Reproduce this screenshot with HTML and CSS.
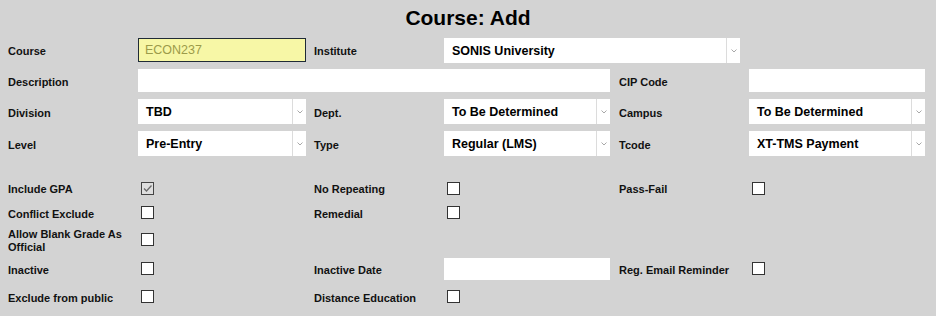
FILE: index.html
```html
<!DOCTYPE html>
<html lang="en">
<head>
  <meta charset="UTF-8" />
  <title>Course: Add</title>
  <link rel="stylesheet" href="styles.css">
</head>
<body>
  <h1 class="page-title">Course: Add</h1>

  <!-- Main fields -->
  <div class="form-grid">
    <label class="lbl">Course</label>
    <div class="text-input course-code">ECON237</div>
    <label class="lbl mid">Institute</label>
    <div class="select wide">
      <span class="value">SONIS University</span>
      <span class="arrow"><svg width="6" height="4" viewBox="0 0 6 4"><path d="M0.5 0.5 L3 3 L5.5 0.5" fill="none" stroke="#a8a8a8" stroke-width="1"/></svg></span>
    </div>
    <div></div>

    <label class="lbl">Description</label>
    <div class="text-input description"></div>
    <label class="lbl right">CIP Code</label>
    <div class="text-input"></div>

    <label class="lbl">Division</label>
    <div class="select">
      <span class="value">TBD</span>
      <span class="arrow"><svg width="6" height="4" viewBox="0 0 6 4"><path d="M0.5 0.5 L3 3 L5.5 0.5" fill="none" stroke="#a8a8a8" stroke-width="1"/></svg></span>
    </div>
    <label class="lbl mid">Dept.</label>
    <div class="select">
      <span class="value">To Be Determined</span>
      <span class="arrow"><svg width="6" height="4" viewBox="0 0 6 4"><path d="M0.5 0.5 L3 3 L5.5 0.5" fill="none" stroke="#a8a8a8" stroke-width="1"/></svg></span>
    </div>
    <label class="lbl right">Campus</label>
    <div class="select">
      <span class="value">To Be Determined</span>
      <span class="arrow"><svg width="6" height="4" viewBox="0 0 6 4"><path d="M0.5 0.5 L3 3 L5.5 0.5" fill="none" stroke="#a8a8a8" stroke-width="1"/></svg></span>
    </div>

    <label class="lbl">Level</label>
    <div class="select">
      <span class="value">Pre-Entry</span>
      <span class="arrow"><svg width="6" height="4" viewBox="0 0 6 4"><path d="M0.5 0.5 L3 3 L5.5 0.5" fill="none" stroke="#a8a8a8" stroke-width="1"/></svg></span>
    </div>
    <label class="lbl mid">Type</label>
    <div class="select">
      <span class="value">Regular (LMS)</span>
      <span class="arrow"><svg width="6" height="4" viewBox="0 0 6 4"><path d="M0.5 0.5 L3 3 L5.5 0.5" fill="none" stroke="#a8a8a8" stroke-width="1"/></svg></span>
    </div>
    <label class="lbl right">Tcode</label>
    <div class="select">
      <span class="value">XT-TMS Payment</span>
      <span class="arrow"><svg width="6" height="4" viewBox="0 0 6 4"><path d="M0.5 0.5 L3 3 L5.5 0.5" fill="none" stroke="#a8a8a8" stroke-width="1"/></svg></span>
    </div>
  </div>

  <!-- Flags -->
  <div class="check-grid">
    <label class="lbl">Include GPA</label>
    <span class="checkbox checked"><svg width="11" height="11" viewBox="0 0 11 11"><path d="M2 5.5 L4.5 8 L9.5 2.5" fill="none" stroke="#6a6a6a" stroke-width="1.3"/></svg></span>
    <label class="lbl mid">No Repeating</label>
    <span class="checkbox"></span>
    <label class="lbl right">Pass-Fail</label>
    <span class="checkbox"></span>

    <label class="lbl">Conflict Exclude</label>
    <span class="checkbox"></span>
    <label class="lbl mid">Remedial</label>
    <span class="checkbox"></span>
    <div></div>
    <div></div>

    <label class="lbl">Allow Blank Grade As Official</label>
    <span class="checkbox"></span>
    <div></div>
    <div></div>
    <div></div>
    <div></div>

    <label class="lbl">Inactive</label>
    <span class="checkbox"></span>
    <label class="lbl mid">Inactive Date</label>
    <div class="text-input date"></div>
    <label class="lbl right">Reg. Email Reminder</label>
    <span class="checkbox"></span>

    <label class="lbl">Exclude from public</label>
    <span class="checkbox"></span>
    <label class="lbl mid">Distance Education</label>
    <span class="checkbox"></span>
    <div></div>
    <div></div>
  </div>
</body>
</html>
```

FILE: styles.css
```css
* {
  box-sizing: border-box;
}
body {
  margin: 0;
  padding: 6px 8px 0;
  background-color: #d3d3d3;
  color: #111;
  font-family: 'Liberation Sans', Arial, sans-serif;
}
.page-title {
  margin: 0 0 8px;
  font-size: 21px;
  line-height: 24px;
  text-align: center;
  color: #000;
}
.form-grid,
.check-grid {
  display: grid;
  grid-template-columns: 130px 168px 138px 166px 139px 176px;
  align-items: center;
}
.form-grid {
  grid-template-rows: 24px 23px 25px 25px;
  row-gap: 7px;
  align-items: start;
}
.check-grid {
  margin-top: 20px;
  grid-template-rows: 24px 25px 29px 29px 27px;
}
.lbl {
  font-size: 11px;
  font-weight: bold;
  line-height: 13px;
  padding-top: 3px;
  align-self: center;
}
.lbl.mid {
  padding-left: 8px;
}
.lbl.right {
  padding-left: 9px;
}

/* Text inputs */
.text-input {
  height: 23px;
  background: #fff;
  font-size: 12.5px;
  line-height: 23px;
  padding-left: 7px;
  align-self: center;
}
.course-code {
  height: 24px;
  background: #f7f7a6;
  border: 1px solid #1f2a36;
  color: #9c9b4a;
  line-height: 23px;
  padding-left: 6px;
}
.description {
  grid-column: span 3;
}
.date {
  height: 22px;
}

/* Drop-downs */
.select {
  display: flex;
  height: 25px;
  background: #fff;
}
.select.wide {
  grid-column: span 2;
  margin-right: 9px;
}
.select .value {
  flex: 1;
  padding-left: 8px;
  font-size: 12.5px;
  font-weight: bold;
  line-height: 26px;
  color: #000;
  white-space: nowrap;
  overflow: hidden;
}
.select .arrow {
  width: 14px;
  border-left: 1px solid #dcdcdc;
  display: flex;
  align-items: center;
  justify-content: center;
}

/* Checkboxes */
.checkbox {
  width: 13px;
  height: 13px;
  margin-left: 3px;
  border: 1px solid #333;
  background: #fff;
  display: flex;
  align-items: center;
  justify-content: center;
}
.checkbox.checked {
  background: #dedede;
  border-color: #444;
}
```
